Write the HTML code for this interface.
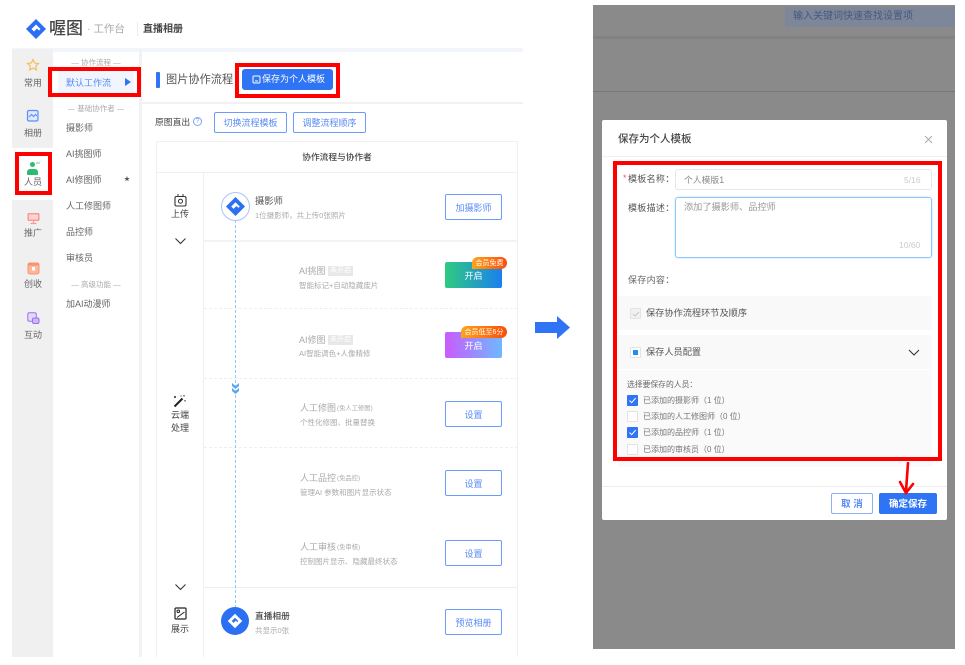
<!DOCTYPE html>
<html lang="zh"><head><meta charset="utf-8"><title>保存为个人模板</title>
<style>
html,body{margin:0;padding:0;background:#fff}
#p{position:relative;width:965px;height:665px;overflow:hidden;background:#fff;font-family:"Liberation Sans","Noto Sans CJK SC",sans-serif;filter:blur(.3px)}
#p div,#p svg{position:absolute}
.t{position:absolute;white-space:nowrap;line-height:1;color:#666;margin-top:2px}
.c{transform:translateX(-50%)}
.b{position:absolute;box-sizing:border-box;border:1px solid #6c9bfb;border-radius:2px;color:#5a8bf5;background:#fff;font-size:9px;text-align:center;white-space:nowrap;padding-top:2px}
.r{position:absolute;box-sizing:border-box;border:4px solid #f00}
.g{color:#aaa}
.cb{position:absolute;box-sizing:border-box;width:11px;height:11px;border-radius:1px;border:1px solid #e3e3e3;background:#fff}
.cb.on{background:#2f74f5;border-color:#2f74f5}
.ls{letter-spacing:.3px}
</style></head><body><div id="p">

<svg style="left:25px;top:18px" width="22" height="22" viewBox="0 0 22 22"><path d="M11 1 21 11 11 21 1 11Z" fill="#2b6ff2"/><path d="M11 6.500 6.500 11 9 13.500 12 10.500 14 12.500 15.500 11Z" fill="#fff"/></svg>
<span class="t" style="left:49px;top:18px;font-size:17px;color:#444;font-weight:500">喔图</span>
<span class="t" style="left:87px;top:22px;font-size:10.500px;color:#aaa">· 工作台</span>
<div style="left:137px;top:22px;width:1px;height:14px;background:#e8edf5"></div>
<span class="t" style="left:143px;top:23px;font-size:10px;color:#444;font-weight:700">直播相册</span>

<div style="left:12px;top:48px;width:511px;height:4px;background:#f2f5fa"></div>
<div style="left:12px;top:49px;width:41px;height:608px;background:#f0f0f0"></div>
<div style="left:139px;top:49px;width:3px;height:608px;background:#f1f2f4"></div>

<svg style="left:26px;top:58px" width="14" height="14" viewBox="0 0 14 14"><path d="M7 1.500 8.700 5 12.500 5.500 9.700 8.100 10.400 12 7 10.100 3.600 12 4.300 8.100 1.500 5.500 5.300 5Z" fill="none" stroke="#f3c05c" stroke-width="1.200"/></svg>
<span class="t c" style="left:33px;top:77px;font-size:9px">常用</span>
<svg style="left:26px;top:109px" width="14" height="14" viewBox="0 0 14 14"><rect x="1.500" y="1.500" width="10.500" height="10.500" rx="1.500" fill="#dfe8fd" stroke="#5c8df5" stroke-width="1.200"/><path d="M3 8 5.500 5.500 7.500 7.500 9.500 5.500 11 7" fill="none" stroke="#5c8df5"/></svg>
<span class="t c" style="left:33px;top:127px;font-size:9px">相册</span>

<div style="left:12px;top:148px;width:41px;height:52px;background:#fff"></div>
<div style="left:30px;top:162px;width:5px;height:5px;border-radius:50%;background:#2dbb74"></div>
<span class="t" style="left:36px;top:159px;font-size:4px;color:#2dbb74">AI</span>
<div style="left:27px;top:169px;width:11px;height:6px;border-radius:3px 3px 1px 1px;background:#2dbb74"></div>
<span class="t c" style="left:33px;top:176px;font-size:9px">人员</span>

<svg style="left:27px;top:212px" width="13" height="13" viewBox="0 0 13 13"><rect x=".5" y="1" width="12" height="8" rx="1" fill="#fb9a93"/><rect x="2" y="2.500" width="9" height="5" fill="#fff" opacity=".6"/><path d="M6.500 9v2M3.500 11.500h6" stroke="#fb9a93" stroke-width="1.200"/></svg>
<span class="t c" style="left:33px;top:227px;font-size:9px">推广</span>
<svg style="left:27px;top:262px" width="13" height="13" viewBox="0 0 13 13"><rect x="1" y="1" width="11" height="11" rx="2" fill="#fdb79b" stroke="#f7936f"/><rect x="1" y="1" width="11" height="2.500" fill="#f7936f"/><rect x="5" y="5" width="3" height="3.500" fill="#fff"/></svg>
<span class="t c" style="left:33px;top:278px;font-size:9px">创收</span>
<svg style="left:27px;top:312px" width="13" height="13" viewBox="0 0 13 13"><rect x=".8" y=".8" width="8.500" height="8.500" rx="1.500" fill="#e5d8fd" stroke="#9a70ee"/><rect x="5.500" y="6" width="6.500" height="5.500" rx="1.500" fill="#cdb5fa" stroke="#9a70ee"/></svg>
<span class="t c" style="left:33px;top:329px;font-size:9px">互动</span>

<span class="t c g" style="left:96px;top:57px;font-size:7.500px">— 协作流程 —</span>
<div style="left:58px;top:71px;width:76px;height:22px;background:#f1f5fe"></div>
<span class="t" style="left:66px;top:77px;font-size:9px;color:#5a8bf5">默认工作流</span>
<svg style="left:124px;top:77px" width="8" height="10"><path d="M1 1 7 5 1 9Z" fill="#2f74f5"/></svg>
<span class="t c g" style="left:96px;top:103px;font-size:7.500px">— 基础协作者 —</span>
<span class="t" style="left:66px;top:122px;font-size:9px">摄影师</span>
<span class="t" style="left:66px;top:148px;font-size:9px">AI挑图师</span>
<span class="t" style="left:66px;top:174px;font-size:9px">AI修图师</span>
<span class="t" style="left:124px;top:175px;font-size:6px;color:#555">★</span>
<span class="t" style="left:66px;top:200px;font-size:9px">人工修图师</span>
<span class="t" style="left:66px;top:226px;font-size:9px">品控师</span>
<span class="t" style="left:66px;top:252px;font-size:9px">审核员</span>
<span class="t c g" style="left:96px;top:279px;font-size:7.500px">— 高级功能 —</span>
<span class="t" style="left:66px;top:298px;font-size:9px">加AI动漫师</span>

<div style="left:156px;top:72px;width:4px;height:16px;background:#2f74f5;border-radius:1px"></div>
<span class="t" style="left:166px;top:73px;font-size:11.200px;color:#555">图片协作流程</span>
<div style="left:242px;top:69px;width:91px;height:21px;background:#2f74f5;border-radius:3px"></div>
<svg style="left:252px;top:75px" width="9" height="9"><rect x="1" y="1" width="7" height="7" rx="1" fill="none" stroke="#fff"/><path d="M3 6h3" stroke="#fff"/></svg>
<span class="t" style="left:262px;top:73px;font-size:9px;color:#fff">保存为个人模板</span>
<div style="left:142px;top:102px;width:381px;height:2px;background:#f1f1f1"></div>

<span class="t" style="left:155px;top:116px;font-size:8.800px;color:#444">原图直出</span>
<div style="left:193px;top:117px;width:9px;height:9px;box-sizing:border-box;border:1px solid #7ea6f7;border-radius:50%;color:#7ea6f7;font-size:7px;line-height:7px;text-align:center">?</div>
<div class="b" style="left:214px;top:112px;width:73px;height:21px;line-height:17px">切换流程模板</div>
<div class="b" style="left:293px;top:112px;width:73px;height:21px;line-height:17px">调整流程顺序</div>

<div style="left:156px;top:141px;width:362px;height:516px;box-sizing:border-box;border:1px solid #f0f0f0;border-bottom:0"></div>
<div style="left:156px;top:172px;width:362px;height:1px;background:#f0f0f0"></div>
<div style="left:203px;top:172px;width:1px;height:485px;background:#f0f0f0"></div>
<span class="t c" style="left:337px;top:151px;font-size:8.700px;color:#444;font-weight:500">协作流程与协作者</span>
<div style="left:204px;top:240px;width:314px;height:2px;background:#f3f3f3"></div>
<div style="left:204px;top:308px;width:314px;border-top:1px dashed #eee"></div>
<div style="left:204px;top:378px;width:314px;border-top:1px dashed #eee"></div>
<div style="left:204px;top:447px;width:314px;border-top:1px dashed #eee"></div>
<div style="left:204px;top:587px;width:314px;height:1px;background:#eee"></div>

<svg style="left:174px;top:194px" width="13" height="13" viewBox="0 0 13 13"><rect x="1" y="2.500" width="11" height="9.500" rx="1.500" fill="none" stroke="#333" stroke-width="1.100"/><circle cx="6.500" cy="7.200" r="2" fill="none" stroke="#333"/><path d="M3 1h2M8 1h2" stroke="#333"/></svg>
<span class="t c" style="left:180px;top:208px;font-size:9px;color:#444">上传</span>
<svg style="left:174px;top:237px" width="13" height="8"><path d="M1.500 1.500 6.500 6.500 11.500 1.500" fill="none" stroke="#333" stroke-width="1.100"/></svg>
<svg style="left:173px;top:394px" width="14" height="14" viewBox="0 0 14 14"><path d="M1.500 12.500 9.500 4.500" stroke="#222" stroke-width="2"/><path d="M2 2v2M1 3h2M11 1v1.500M12 6v1.500M8 1.500v1" stroke="#222"/></svg>
<span class="t c" style="left:180px;top:409px;font-size:9px;color:#444">云端</span>
<span class="t c" style="left:180px;top:422px;font-size:9px;color:#444">处理</span>
<svg style="left:174px;top:583px" width="13" height="8"><path d="M1.500 1.500 6.500 6.500 11.500 1.500" fill="none" stroke="#333" stroke-width="1.100"/></svg>
<svg style="left:174px;top:607px" width="13" height="13" viewBox="0 0 13 13"><rect x="1" y="1" width="11" height="11" rx="1" fill="none" stroke="#222" stroke-width="1.200"/><circle cx="4.300" cy="4.300" r="1.300" fill="none" stroke="#222"/><path d="M3 10.500 10.500 5" stroke="#222"/></svg>
<span class="t c" style="left:180px;top:623px;font-size:9px;color:#444">展示</span>

<div style="left:235px;top:220px;width:1px;height:387px;background:repeating-linear-gradient(180deg,#8ccafc 0 3px,#fff 3px 5px)"></div>
<svg style="left:232px;top:383px" width="7" height="11"><path d="M0 0 3.500 3 7 0V3L3.500 6 0 3ZM0 5 3.500 8 7 5V8L3.500 11 0 8Z" fill="#5ba6f2"/></svg>

<div style="left:221px;top:192px;width:29px;height:29px;box-sizing:border-box;border:1px solid #a9c5fa;border-radius:50%;background:#fff"></div>
<svg style="left:225px;top:196px" width="21" height="21" viewBox="0 0 22 22"><path d="M11 1 21 11 11 21 1 11Z" fill="#2b6ff2"/><path d="M11 6.500 6.500 11 9 13.500 12 10.500 14 12.500 15.500 11Z" fill="#fff"/></svg>
<span class="t" style="left:255px;top:195px;font-size:9.300px;color:#555">摄影师</span>
<span class="t g" style="left:255px;top:210px;font-size:7.500px">1位摄影师，共上传0张照片</span>
<div class="b" style="left:445px;top:194px;width:57px;height:26px;line-height:22px">加摄影师</div>

<span class="t g" style="left:299px;top:265px;font-size:9px">AI挑图</span>
<div style="left:328px;top:266px;width:25px;height:10px;background:#e8e8e8;color:#fff;font-size:7px;line-height:10px;text-align:center">未开启</div>
<span class="t g" style="left:299px;top:280px;font-size:7.500px">智能标记+自动隐藏废片</span>
<div style="left:445px;top:262px;width:57px;height:26px;border-radius:2px;background:linear-gradient(90deg,#2fcb80,#1a7ff0);color:#fff;font-size:9px;line-height:28px;text-align:center">开启</div>
<div style="left:472px;top:257px;width:35px;height:12px;border-radius:6px 6px 6px 0;background:linear-gradient(90deg,#ffa31a,#fb4d0a);color:#fff;font-size:7px;line-height:13px;text-align:center">会员免费</div>

<span class="t g" style="left:299px;top:334px;font-size:9px">AI修图</span>
<div style="left:328px;top:335px;width:25px;height:10px;background:#e8e8e8;color:#fff;font-size:7px;line-height:10px;text-align:center">未开启</div>
<span class="t g" style="left:299px;top:348px;font-size:7.500px">AI智能调色+人像精修</span>
<div style="left:445px;top:332px;width:57px;height:26px;border-radius:2px;background:linear-gradient(90deg,#ca5bff,#6eb9ff);color:#fff;font-size:9px;line-height:28px;text-align:center">开启</div>
<div style="left:461px;top:326px;width:46px;height:12px;border-radius:6px 6px 6px 0;background:linear-gradient(90deg,#ffa31a,#fb4d0a);color:#fff;font-size:7px;line-height:13px;text-align:center">会员低至6分</div>

<span class="t g" style="left:300px;top:402px;font-size:9px">人工修图</span><span class="t g" style="left:337px;top:404px;font-size:6.300px">(免人工修图)</span>
<span class="t g" style="left:300px;top:417px;font-size:7.500px">个性化修图、批量替换</span>
<div class="b" style="left:445px;top:401px;width:57px;height:26px;line-height:22px">设置</div>

<span class="t g" style="left:300px;top:472px;font-size:9px">人工品控</span><span class="t g" style="left:337px;top:474px;font-size:6.300px">(免品控)</span>
<span class="t g" style="left:300px;top:487px;font-size:7.500px">管理AI 参数和图片显示状态</span>
<div class="b" style="left:445px;top:470px;width:57px;height:26px;line-height:22px">设置</div>

<span class="t g" style="left:300px;top:541px;font-size:9px">人工审核</span><span class="t g" style="left:337px;top:543px;font-size:6.300px">(免审核)</span>
<span class="t g" style="left:300px;top:556px;font-size:7.500px">控制图片显示、隐藏最终状态</span>
<div class="b" style="left:445px;top:540px;width:57px;height:26px;line-height:22px">设置</div>

<div style="left:221px;top:607px;width:28px;height:28px;border-radius:50%;background:#2b6ff2"></div>
<svg style="left:227px;top:613px" width="16" height="16" viewBox="0 0 22 22"><path d="M11 1 21 11 11 21 1 11Z" fill="#fff"/><path d="M11 6.500 6.500 11 9 13.500 12 10.500 14 12.500 15.500 11Z" fill="#2b6ff2"/></svg>
<span class="t" style="left:255px;top:610px;font-size:8.700px;color:#444;font-weight:500">直播相册</span>
<span class="t g" style="left:255px;top:625px;font-size:7.500px">共显示0张</span>
<div class="b" style="left:445px;top:609px;width:57px;height:26px;line-height:22px">预览相册</div>

<div class="r" style="left:48px;top:67px;width:93px;height:30px"></div>
<div class="r" style="left:15px;top:152px;width:37px;height:43px"></div>
<div class="r" style="left:235px;top:63px;width:105px;height:35px"></div>

<svg style="left:535px;top:316px" width="35" height="24"><path d="M0 6H22V0L35 11.500 22 23V17H0Z" fill="#2f74f5"/></svg>

<div style="left:593px;top:5px;width:362px;height:644px;background:#8a8a8a"></div>
<div style="left:785px;top:7px;width:170px;height:20px;background:#7e8799"></div>
<span class="t" style="left:793px;top:10px;font-size:10px;color:#47587e">输入关键词快速查找设置项</span>
<div style="left:593px;top:36px;width:362px;height:3px;background:#828286"></div>
<div style="left:593px;top:91px;width:362px;height:1px;background:#777"></div>

<div style="left:602px;top:120px;width:345px;height:400px;background:#fff;border-radius:2px"></div>
<span class="t" style="left:618px;top:132px;font-size:10.500px;color:#444;font-weight:500">保存为个人模板</span>
<svg style="left:924px;top:135px" width="9" height="9"><path d="M1 1 8 8M8 1 1 8" stroke="#aaa"/></svg>
<div style="left:602px;top:156px;width:345px;height:1px;background:#f1f1f1"></div>

<span class="t" style="left:623px;top:172px;font-size:9px;color:#f55">*</span>
<span class="t ls" style="left:628px;top:173px;font-size:9px;color:#555">模板名称：</span>
<div style="left:675px;top:169px;width:257px;height:21px;box-sizing:border-box;border:1px solid #e6e6e6;border-radius:3px"></div>
<span class="t" style="left:684px;top:174px;font-size:8.800px;color:#888">个人模版1</span>
<span class="t" style="left:904px;top:174px;font-size:8.500px;color:#ccc">5/16</span>
<span class="t ls" style="left:628px;top:202px;font-size:9px;color:#555">模板描述：</span>
<div style="left:675px;top:197px;width:257px;height:61px;box-sizing:border-box;border:1px solid #8fc7fb;border-radius:3px;box-shadow:0 0 2px #bfe0fc"></div>
<span class="t" style="left:684px;top:201px;font-size:9.200px;color:#999">添加了摄影师、品控师</span>
<span class="t" style="left:899px;top:239px;font-size:8.500px;color:#ccc">10/60</span>

<span class="t ls" style="left:628px;top:274px;font-size:9px;color:#666">保存内容：</span>
<div style="left:618px;top:296px;width:314px;height:34px;background:#f9f9f9"></div>
<div class="cb" style="left:630px;top:308px;background:#f1f1f1"></div>
<svg style="left:632px;top:310px" width="8" height="8"><path d="M1 4 3 6 7 2" fill="none" stroke="#c8c8c8"/></svg>
<span class="t" style="left:646px;top:307px;font-size:9.200px;color:#555">保存协作流程环节及顺序</span>
<div style="left:618px;top:335px;width:314px;height:34px;background:#f9f9f9"></div>
<div class="cb" style="left:630px;top:347px"></div>
<div style="left:633px;top:350px;width:5px;height:5px;background:#1e8ff5"></div>
<span class="t" style="left:646px;top:346px;font-size:9.200px;color:#555">保存人员配置</span>
<svg style="left:908px;top:349px" width="12" height="7"><path d="M1 1 6 6 11 1" fill="none" stroke="#333" stroke-width="1.100"/></svg>
<div style="left:618px;top:370px;width:314px;height:97px;background:#fafafa"></div>
<span class="t" style="left:627px;top:379px;font-size:7.800px;color:#666">选择要保存的人员：</span>
<div class="cb on" style="left:627px;top:395px"></div>
<svg style="left:628px;top:396px" width="9" height="9"><path d="M1.500 4.500 3.700 6.700 7.700 2" fill="none" stroke="#fff"/></svg>
<span class="t" style="left:643px;top:395px;font-size:8px;color:#777">已添加的摄影师（1 位）</span>
<div class="cb" style="left:627px;top:411px"></div>
<span class="t" style="left:643px;top:411px;font-size:8px;color:#777">已添加的人工修图师（0 位）</span>
<div class="cb on" style="left:627px;top:427px"></div>
<svg style="left:628px;top:428px" width="9" height="9"><path d="M1.500 4.500 3.700 6.700 7.700 2" fill="none" stroke="#fff"/></svg>
<span class="t" style="left:643px;top:427px;font-size:8px;color:#777">已添加的品控师（1 位）</span>
<div class="cb" style="left:627px;top:444px"></div>
<span class="t" style="left:643px;top:444px;font-size:8px;color:#777">已添加的审核员（0 位）</span>

<div style="left:602px;top:486px;width:345px;height:1px;background:#eee"></div>
<div class="b" style="left:831px;top:493px;width:42px;height:21px;line-height:17px;border-color:#8db0f8;font-size:9.500px;font-weight:700">取 消</div>
<div style="left:879px;top:493px;width:58px;height:21px;border-radius:2px;background:#2f74f5;color:#fff;font-size:9.500px;font-weight:700;line-height:23px;text-align:center">确定保存</div>

<div class="r" style="left:613px;top:161px;width:329px;height:300px"></div>
<svg style="left:896px;top:462px" width="22" height="34"><path d="M12 1 10 29M4 20 10 31 17 22" fill="none" stroke="#f00" stroke-width="2.600" stroke-linecap="round"/></svg>

</div></body></html>
